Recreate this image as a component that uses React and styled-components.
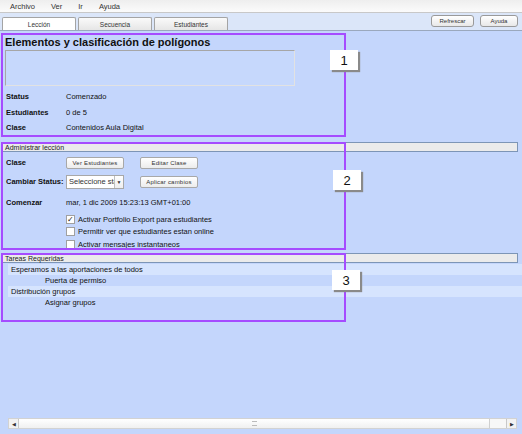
import React from 'react'
import styled, { createGlobalStyle } from 'styled-components'

const Global = createGlobalStyle`
   html, body {
      margin: 0;
      padding: 0;
      background: #c4d6fc;
   }
   body {
      font-family: 'Liberation Sans', Arial, sans-serif;
      color: #111;
   }
`

const Page = styled.div`
   position: relative;
   width: 522px;
   height: 434px;
   overflow: hidden;
   display: flex;
   flex-direction: column;
   background: #c4d6fc;
`

const MenuBar = styled.div`
   height: 12px;
   display: flex;
   align-items: center;
   padding-left: 10px;
   gap: 16px;
   background: linear-gradient(to bottom, #eeeeee, #fbfbfb);
   border-bottom: 1px solid #c8c8c8;
   font-size: 7.5px;
   color: #333;
`

const TabStrip = styled.div`
   height: 17px;
   display: flex;
   align-items: flex-end;
   padding: 0 4px 0 2px;
   background: #dbe6f9;
   border-bottom: 1px solid #9aa8bd;
`

const Tab = styled.div`
   width: 72px;
   height: 12px;
   margin-right: 2px;
   display: flex;
   align-items: center;
   justify-content: center;
   font-size: 6.5px;
   color: #333;
   border: 1px solid #a4a4a4;
   border-bottom: none;
   border-radius: 2px 2px 0 0;
   background: ${p => (p.active ? '#ffffff' : 'linear-gradient(to bottom, #fafafa, #e6e6e6)')};
`

const Spacer = styled.div`
   flex: 1;
`

const TopButton = styled.div`
   width: ${p => p.w}px;
   height: 10px;
   margin: 0 0 3px 6px;
   display: flex;
   align-items: center;
   justify-content: center;
   font-size: 6px;
   color: #333;
   border: 1px solid #9a9a9a;
   border-radius: 3px;
   background: linear-gradient(to bottom, #ffffff, #e8e8e8);
`

const Main = styled.div`
   flex: 1;
   overflow: hidden;
`

const Section1 = styled.div`
   padding: 5px 0 0 5px;
   height: 106px;
`

const Title = styled.div`
   font-size: 11px;
   font-weight: bold;
   line-height: 13px;
`

const TextArea = styled.div`
   width: 288px;
   height: 34px;
   margin-top: 1px;
   border: 1px solid #a6a6a6;
   border-right-color: #e2e2e2;
   border-bottom-color: #e2e2e2;
   background: #c6d8fc;
`

const InfoList = styled.div`
   margin-top: 3px;
   padding-left: 1px;
`

const InfoRow = styled.div`
   height: 15.5px;
   display: flex;
   align-items: center;
   font-size: 7.5px;
`

const Label = styled.div`
   width: ${p => p.w || 60}px;
   font-weight: bold;
`

const Header = styled.div`
   height: 8px;
   margin: 0 4px 0 1px;
   padding-left: 3px;
   display: flex;
   align-items: center;
   font-size: 7px;
   color: #222;
   background: #ebebeb;
   border: 1px solid #7d95b6;
`

const Section2 = styled.div`
   height: 100px;
   padding: 1px 0 0 6px;
`

const FormRow = styled.div`
   height: ${p => p.h}px;
   display: flex;
   align-items: center;
   font-size: 7.5px;
`

const Button = styled.div`
   width: 56px;
   height: 10px;
   margin-right: 16px;
   display: flex;
   align-items: center;
   justify-content: center;
   font-size: 6px;
   letter-spacing: 0.2px;
   color: #333;
   border: 1px solid #a8a8a8;
   border-radius: 2px;
   background: linear-gradient(to bottom, #ffffff, #ececec);
`

const Select = styled.div`
   width: 56px;
   height: 12px;
   margin-right: 16px;
   display: flex;
   border: 1px solid #a8a8a8;
   background: #fff;
   font-size: 7.5px;
   color: #333;
`

const SelectText = styled.div`
   width: 45px;
   overflow: hidden;
   white-space: nowrap;
   padding-left: 2px;
   line-height: 12px;
`

const SelectArrow = styled.div`
   flex: 1;
   border-left: 1px solid #c0c0c0;
   display: flex;
   align-items: center;
   justify-content: center;
   font-size: 5px;
   background: linear-gradient(to bottom, #ffffff, #eeeeee);
`

const CheckRow = styled.div`
   height: 12.5px;
   display: flex;
   align-items: center;
   padding-left: 60px;
   font-size: 7.5px;
`

const Box = styled.div`
   width: 7px;
   height: 7px;
   margin-right: 3px;
   border: 1px solid #a0a0a0;
   background: #fff;
   display: flex;
   align-items: center;
   justify-content: center;
   font-size: 8px;
   line-height: 7px;
   color: #222;
`

const Section3 = styled.div`
   padding: 1px 0 0 8px;
`

const TaskRow = styled.div`
   width: 540px;
   height: 11px;
   display: flex;
   align-items: center;
   padding-left: ${p => (p.sub ? 37 : 3)}px;
   font-size: 7.5px;
   background: ${p => (p.light ? '#d6e4fe' : 'transparent')};
`

const GoButton = styled.div`
   margin-left: auto;
   margin-right: 18px;
   width: 20px;
   height: 7px;
   border: 1px solid #999;
   border-radius: 3px;
   background: linear-gradient(to bottom, #ffffff, #e4e4e4);
   font-size: 5px;
   line-height: 7px;
   padding-left: 4px;
   color: #333;
`

const ScrollBar = styled.div`
   height: 9px;
   margin: 0 5px 5px 8px;
   display: flex;
   background: #f7f7f7;
   border: 1px solid #d2d2d2;
`

const ScrollArrow = styled.div`
   width: 9px;
   display: flex;
   align-items: center;
   justify-content: center;
   background: #f2f2f2;
   border-${p => (p.right ? 'left' : 'right')}: 1px solid #c8c8c8;
   font-size: 5px;
   color: #333;
`

const Thumb = styled.div`
   width: 470px;
   display: flex;
   align-items: center;
   justify-content: center;
   background: linear-gradient(to bottom, #ffffff, #f0f0f0);
   border-right: 1px solid #d0d0d0;
`

const Grip = styled.div`
   width: 5px;
   height: 3px;
   border-top: 1px solid #bbb;
   border-bottom: 1px solid #bbb;
`

const Outline = styled.div`
   position: absolute;
   left: 1px;
   top: ${p => p.top}px;
   width: 341px;
   height: ${p => p.h}px;
   border: 2px solid #a54cff;
   pointer-events: none;
`

const Callout = styled.div`
   position: absolute;
   left: ${p => p.left}px;
   top: ${p => p.top}px;
   width: 28px;
   height: 20px;
   display: flex;
   align-items: center;
   justify-content: center;
   background: #fff;
   box-shadow: 2px 2px 1px #8a8a8a;
   font-size: 13px;
   color: #111;
`

export default function App() {
   return (
      <Page>
         <Global />
         <MenuBar>
            <span>Archivo</span>
            <span>Ver</span>
            <span>Ir</span>
            <span>Ayuda</span>
         </MenuBar>
         <TabStrip>
            <Tab active>Lección</Tab>
            <Tab>Secuencia</Tab>
            <Tab>Estudiantes</Tab>
            <Spacer />
            <TopButton w={41}>Refrescar</TopButton>
            <TopButton w={36}>Ayuda</TopButton>
         </TabStrip>
         <Main>
            <Section1>
               <Title>Elementos y clasificación de polígonos</Title>
               <TextArea />
               <InfoList>
                  <InfoRow>
                     <Label>Status</Label>
                     Comenzado
                  </InfoRow>
                  <InfoRow>
                     <Label>Estudiantes</Label>
                     0 de 5
                  </InfoRow>
                  <InfoRow>
                     <Label>Clase</Label>
                     Contenidos Aula Digital
                  </InfoRow>
               </InfoList>
            </Section1>
            <Header>Administrar lección</Header>
            <Section2>
               <FormRow h={19}>
                  <Label>Clase</Label>
                  <Button>Ver Estudiantes</Button>
                  <Button>Editar Clase</Button>
               </FormRow>
               <FormRow h={19}>
                  <Label>Cambiar Status:</Label>
                  <Select>
                     <SelectText>Seleccione status</SelectText>
                     <SelectArrow>▼</SelectArrow>
                  </Select>
                  <Button>Aplicar cambios</Button>
               </FormRow>
               <FormRow h={22}>
                  <Label>Comenzar</Label>
                  mar, 1 dic 2009 15:23:13 GMT+01:00
               </FormRow>
               <CheckRow>
                  <Box>✓</Box>
                  Activar Portfolio Export para estudiantes
               </CheckRow>
               <CheckRow>
                  <Box />
                  Permitir ver que estudiantes estan online
               </CheckRow>
               <CheckRow>
                  <Box />
                  Activar mensajes instantaneos
               </CheckRow>
            </Section2>
            <Header>Tareas Requeridas</Header>
            <Section3>
               <TaskRow light>Esperamos a las aportaciones de todos</TaskRow>
               <TaskRow sub>
                  Puerta de permiso
                  <GoButton>Ir</GoButton>
               </TaskRow>
               <TaskRow light>Distribución grupos</TaskRow>
               <TaskRow sub>
                  Asignar grupos
                  <GoButton>Ir</GoButton>
               </TaskRow>
            </Section3>
         </Main>
         <ScrollBar>
            <ScrollArrow>◀</ScrollArrow>
            <Thumb>
               <Grip />
            </Thumb>
            <Spacer />
            <ScrollArrow right>▶</ScrollArrow>
         </ScrollBar>

         <Outline top={33} h={100} />
         <Outline top={142} h={104} />
         <Outline top={253} h={65} />
         <Callout left={330} top={50}>1</Callout>
         <Callout left={333} top={170}>2</Callout>
         <Callout left={332} top={270}>3</Callout>
      </Page>
   )
}
